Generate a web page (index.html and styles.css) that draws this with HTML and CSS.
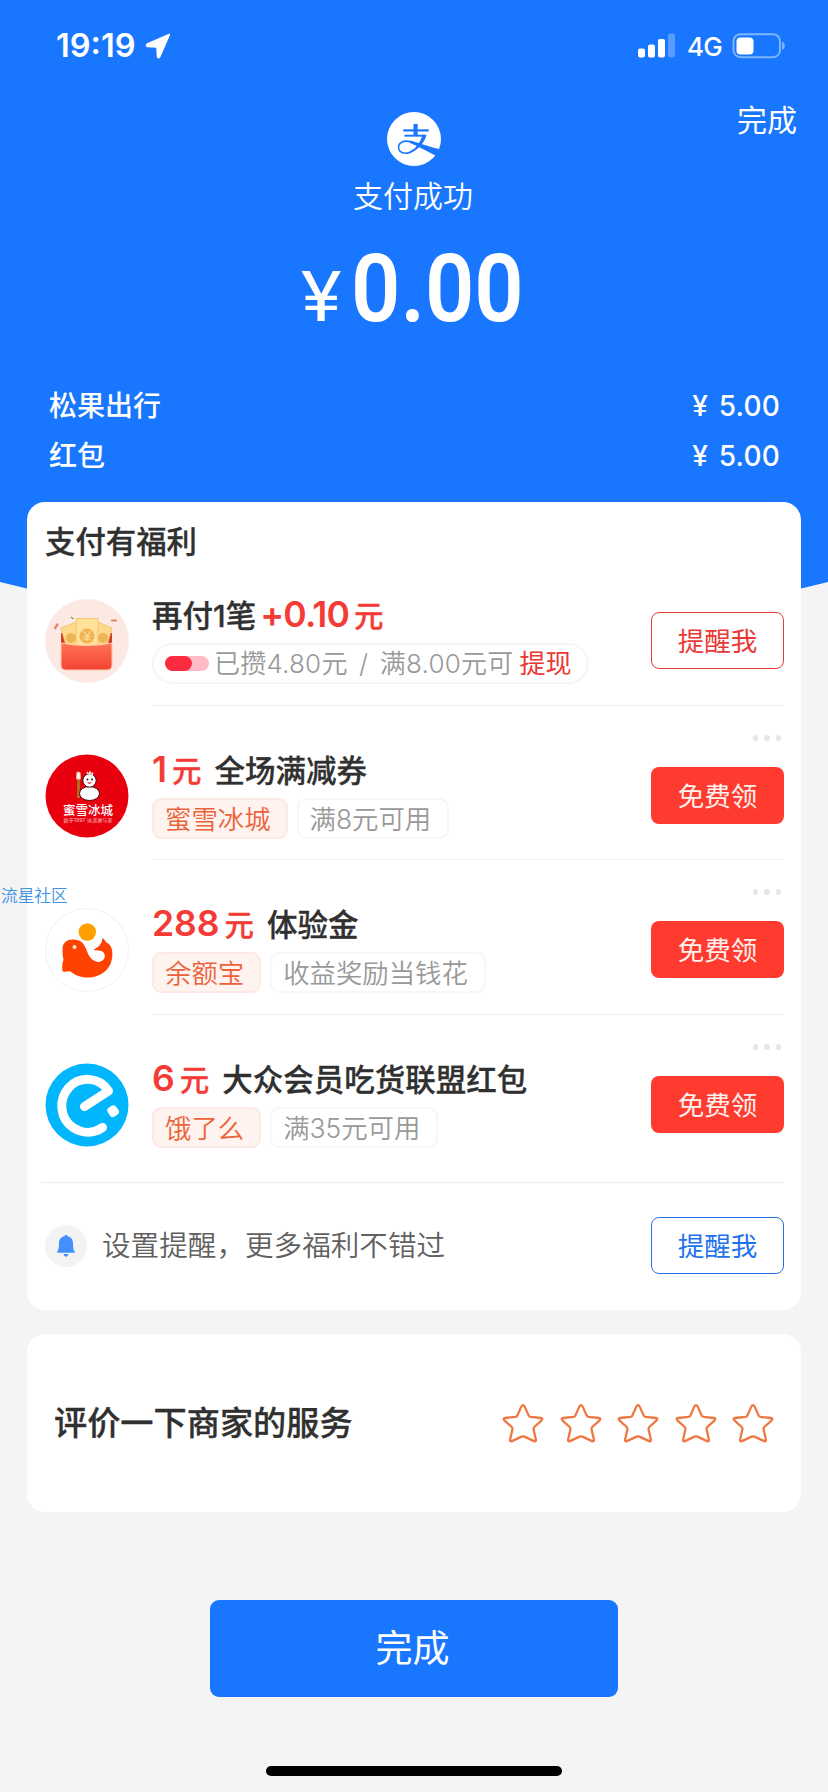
FILE: index.html
```html
<!DOCTYPE html>
<html lang="zh-CN">
<head>
<meta charset="utf-8">
<title>支付成功</title>
<link rel="stylesheet" href="styles.css">
</head>
<body>
<svg class="defs" width="0" height="0" aria-hidden="true">
  <symbol id="star" viewBox="0 0 42 40"><path d="M21 2.2 Q22 2.2 22.6 3.4 L26.600 12.400 Q27.200 13.700 28.600 13.900 L38.800 15 Q41.400 15.500 39.600 17.300 L32.300 24 Q31.300 25 31.600 26.400 L33.900 36.600 Q34.100 39 32.100 38.100 L22.400 33.600 Q21 33 19.600 33.600 L9.900 38.100 Q7.900 39 8.100 36.600 L10.400 26.400 Q10.700 25 9.700 24 L2.400 17.300 Q.6 15.500 3.200 15 L13.400 13.900 Q14.800 13.700 15.400 12.400 L19.400 3.400 Q20 2.200 21 2.200Z" fill="none" stroke="#ee7842" stroke-width="2.300"/></symbol>
</svg>
<div class="screen">
  <header class="hero">
    <div class="status">
      <div class="status-left">
        <span class="clock">19:19</span>
        <svg class="locate" width="26" height="26" viewBox="0 0 26 26"><path d="M24.300 1.600 L2.300 11.100 Q.4 12.500 2.500 13.400 L11.400 13.900 Q12 14 12 14.600 L12.500 23.600 Q13.200 25.600 14.700 23.700Z" fill="#fff" stroke="#fff" stroke-width="1.600" stroke-linejoin="round"/></svg>
      </div>
      <div class="status-right">
        <svg width="38" height="26" viewBox="0 0 38 26" fill="#fff"><rect x="0" y="15.500" width="7" height="9" rx="2"/><rect x="10" y="11.500" width="7" height="13" rx="2"/><rect x="20" y="6" width="7" height="18.500" rx="2"/><rect x="30" y="0.500" width="7" height="24" rx="2" opacity=".28"/></svg>
        <span class="network">4G</span>
        <svg width="54" height="26" viewBox="0 0 54 26"><rect x="1.500" y="1.200" width="46.500" height="23" rx="7" fill="none" stroke="#7db5ff" stroke-width="2"/><rect x="4.500" y="4.500" width="17" height="17" rx="4" fill="#fff"/><path d="M50 8.500 Q52.800 9.500 52.800 12.800 Q52.800 16 50 17Z" fill="#7db5ff"/></svg>
      </div>
    </div>
    <div class="nav"><span>完成</span></div>
    <div class="result">
      <svg width="54" height="54" viewBox="0 0 54 54"><circle cx="27" cy="27" r="27" fill="#fff"/><g fill="none" stroke="#1876ff"><path d="M16.300 18.400 H41.700" stroke-width="2.200"/><path d="M17.500 23.700 H37" stroke-width="1.900"/><path d="M28.600 12 V24" stroke-width="4.200"/><path d="M27.500 37.500 C23 41 20 41.300 18.500 41.300 C13 41.300 11.200 37.500 11.600 34.500 C12 30.500 16.500 28.800 21 29.200 C25 29.600 29 31.200 34 33.500" stroke-width="1.600"/></g><path d="M35.500 22.800 H39.500 C38 29 33 37.500 22 41.500 C29 36.500 34 29.500 35.500 22.800Z M22 28.500 C29 29.500 40 34.500 54 37.500 L52.500 41 L49.500 44 C41 40 32 34.500 22 30.500Z" fill="#1876ff"/></svg>
      <p class="result-text">支付成功</p>
      <p class="amount"><span class="yen">¥</span><span class="figure">0.00</span></p>
    </div>
    <dl class="bill">
      <div><dt>松果出行</dt><dd>¥ 5.00</dd></div>
      <div><dt>红包</dt><dd>¥ 5.00</dd></div>
    </dl>
  </header>

  <main>
    <section class="card benefits">
      <h2>支付有福利</h2>
      <article class="row">
        <svg class="logo" viewBox="0 0 84 84"><defs><linearGradient id="env" x1="0" y1="0" x2="0" y2="1"><stop offset="0" stop-color="#ff7555"/><stop offset="1" stop-color="#f34233"/></linearGradient></defs><circle cx="42" cy="42" r="42" fill="#fde9e3"/><path d="M16 34 H67 V52 H16Z" fill="#d63a2c"/><g fill="#ffd98a" stroke="#f6bd62" stroke-width=".8"><path d="M16 29 L34 22 V50 H22Z"/><path d="M67 29 L50 22 V50 H61Z"/><path d="M31 19.500 H53 V50 H31Z" fill="#ffe19a"/></g><g fill="#efb457"><circle cx="26" cy="39" r="5"/><circle cx="58" cy="39" r="5"/><circle cx="42" cy="37" r="7.500"/></g><path d="M38 32 L42 37 L46 32 M42 37 V42 M38.500 37.500 H45.500 M38.500 40 H45.500" stroke="#ffe19a" stroke-width="1.200" fill="none"/><path d="M16 44 Q42 49 67 44 V66 Q67 71 62 71 H21 Q16 71 16 66Z" fill="url(#env)" stroke="#ffc9a8" stroke-width="1"/><path d="M10 29 L12.500 25.500 M67 21.500 H71" stroke="#e58161" stroke-width="2.200" stroke-linecap="round"/><path d="M26 18 L28.500 20" stroke="#8a9b72" stroke-width="1.500"/></svg>
        <div class="body">
          <h3>再付1笔<b class="plus">+0.10</b><i class="unit">元</i></h3>
          <p class="pill"><span class="meter"><span></span></span><span class="saved">已攒4.80元 / 满8.00元可</span><em>提现</em></p>
        </div>
        <div class="action"><span class="dots"></span><a class="btn outline-red">提醒我</a></div>
      </article>
      <article class="row short">
        <svg class="logo" viewBox="0 0 84 84"><circle cx="42" cy="42" r="41.500" fill="#e8000f"/><g stroke="#3c0b0b" stroke-width="1"><path d="M33.500 22 L33.500 44" stroke="#b46a22" stroke-width="3"/><path d="M32 18 L35 18.500 L35.500 25 L31.500 25Z" fill="#fff" stroke="#efb9a0"/><ellipse cx="44.500" cy="39.500" rx="10" ry="7" fill="#fff"/><circle cx="44.500" cy="26.500" r="6.700" fill="#fff"/><path d="M41.500 20 L42 17 L43.500 19 L45 16.500 L46.500 19 L48.500 18 L48 21Z" fill="#f7d9c9" stroke="none"/></g><circle cx="42.500" cy="25.500" r="1" fill="#222"/><circle cx="47" cy="25.500" r="1" fill="#222"/><path d="M42 28.500 Q44.500 31 47 28.500Z" fill="#e8000f"/><text class="logo-name" x="43" y="60.500" text-anchor="middle" textLength="50">蜜雪冰城</text><text class="logo-tag" x="43" y="67.500" text-anchor="middle" textLength="49">始于1997·冰淇淋与茶</text></svg>
        <div class="body">
          <h3><b>1</b><i class="unit">元</i><span class="name">全场满减券</span></h3>
          <p class="tags"><span class="tag brand">蜜雪冰城</span><span class="tag">满8元可用</span></p>
        </div>
        <div class="action"><span class="dots"><i></i><i></i><i></i></span><a class="btn solid-red">免费领</a></div>
      </article>
      <article class="row">
        <svg class="logo" viewBox="0 0 84 84"><circle cx="42" cy="42" r="41.500" fill="#fff" stroke="#f1f1f1"/><circle cx="42.300" cy="24" r="8.700" fill="#ffa000"/><path d="M17.500 41 C17.500 34 23 31 29 31.500 C38 32 40 38 42.500 44.500 C45.500 52 51 55 55.500 53.500 C60 52 61 47.500 58.500 44.500 C56 41.500 51.500 43.500 48.500 41.500 C53 39.500 57 36.500 57.500 30 C59 30.500 60 33 61.500 34.500 C66.500 36.500 68 43 67.200 49 C66 62 55 69.500 42.500 69.500 C35 69.500 30 67 25.500 63.500 C23 62.500 20 65 17.500 63 C17 59.500 17 55 18.500 52 C17.500 48 17.500 44 17.500 41Z" fill="#ff4200"/><circle cx="29.500" cy="39" r="2" fill="#ffe4d8"/></svg>
        <div class="body">
          <h3><b>288</b><i class="unit">元</i><span class="name">体验金</span></h3>
          <p class="tags"><span class="tag brand">余额宝</span><span class="tag">收益奖励当钱花</span></p>
        </div>
        <div class="action"><span class="dots"><i></i><i></i><i></i></span><a class="btn solid-red">免费领</a></div>
      </article>
      <article class="row last">
        <svg class="logo" viewBox="0 0 84 84"><circle cx="42" cy="42" r="41.500" fill="#02b6fd"/><path d="M39.500 43.500 L63.500 28 C54 13 34 13 23.500 25 C13 37 15 56 28 64.500 C38 71 49 70.500 57.500 64.500" fill="none" stroke="#fff" stroke-width="9" stroke-linecap="round" stroke-linejoin="round"/><rect x="63" y="43" width="10" height="10.500" rx="3.200" fill="#fff" transform="rotate(-34 68 48)"/></svg>
        <div class="body">
          <h3><b>6</b><i class="unit">元</i><span class="name">大众会员吃货联盟红包</span></h3>
          <p class="tags"><span class="tag brand">饿了么</span><span class="tag">满35元可用</span></p>
        </div>
        <div class="action"><span class="dots"><i></i><i></i><i></i></span><a class="btn solid-red">免费领</a></div>
      </article>
      <div class="remind">
        <svg width="42" height="42" viewBox="0 0 42 42"><circle cx="21" cy="21" r="21" fill="#f3f3f3"/><path d="M21 9.800 Q22.300 9.800 22.500 11.300 C26.500 12 28 15 28 18.500 C28 23 28.500 25 29.700 26.500 V27.700 H12.300 V26.500 C13.500 25 14 23 14 18.500 C14 15 15.500 12 19.500 11.300 Q19.700 9.800 21 9.800Z M18.500 29 H23.500 Q23 31.700 21 31.700 Q19 31.700 18.500 29Z" fill="#438fff"/></svg>
        <span class="remind-text">设置提醒，更多福利不错过</span>
        <a class="btn outline-blue">提醒我</a>
      </div>
    </section>

    <section class="card rate">
      <h2>评价一下商家的服务</h2>
      <div class="stars">
        <svg><use href="#star"/></svg><svg><use href="#star"/></svg><svg><use href="#star"/></svg><svg><use href="#star"/></svg><svg><use href="#star"/></svg>
      </div>
    </section>
  </main>

  <a class="done">完成</a>
  <div class="home-bar"></div>
  <span class="watermark">流星社区</span>
</div>
</body>
</html>
```

FILE: styles.css
```css
* { box-sizing: border-box; margin: 0; padding: 0; }

body {
  background: #f4f4f4;
  color: #303030;
  font-family: Inter, "Noto Sans CJK SC", sans-serif;
}

i, em { font-style: normal; }
.defs { position: absolute; }

.screen {
  position: relative;
  display: flex;
  flex-direction: column;
  align-items: center;
  width: 828px;
  height: 1792px;
  overflow: hidden;
}

/* Blue header; its lower edge dips behind the first card */
.hero {
  width: 828px;
  height: 620px;
  margin-bottom: -118px;
  color: #fff;
  background: #1876ff;
  clip-path: polygon(0 0, 100% 0, 100% 582px, 90% 602px, 10% 602px, 0 582px);
}

.status {
  display: flex;
  justify-content: space-between;
  align-items: center;
  height: 90px;
  padding: 1px 42px 0 56px;
}
.status-left, .status-right { display: flex; align-items: center; }
.clock { width: 89px; padding-top: 1px; font-size: 32.5px; line-height: 40px; font-weight: 600; letter-spacing: 0; }
.network { width: 56px; padding: 2px 0 0 11px; font-size: 26px; line-height: 30px; font-weight: 500; letter-spacing: -.8px; }

.nav {
  display: flex;
  justify-content: flex-end;
  height: 22px;
  padding: 10px 31px 0 0;
  font-size: 30px;
  line-height: 40px;
  font-weight: 400;
}

.result { display: flex; flex-direction: column; align-items: center; height: 274px; }
.result-text { margin: 10px 2px 0 0; font-size: 30px; line-height: 40px; font-weight: 350; }
.amount { display: flex; align-items: baseline; width: 226px; margin-top: 18px; line-height: 110px; font-family: Roboto, sans-serif; white-space: nowrap; }
.amount span { flex: none; }
.yen { width: 50px; font-size: 70px; transform: scaleX(1.1); transform-origin: left; }
/* Narrow, DIN-like numerals */
.figure { font-size: 95px; font-weight: 600; transform: scaleX(.91); transform-origin: left; }

.bill { display: flex; flex-direction: column; gap: 10px; padding: 0 48px; font-size: 28px; line-height: 40px; font-weight: 500; }
.bill div { display: flex; justify-content: space-between; }
.bill dt { padding-left: 1px; }
.bill dd { font-size: 28px; letter-spacing: .2px; word-spacing: 3px; }

.card { position: relative; width: 774px; background: #fff; border-radius: 18px; }
.benefits { height: 808px; padding: 20px 17px 0 14px; }
.card h2, .card h3 { -webkit-text-stroke: .3px currentColor; }
.benefits h2 { height: 29px; padding-left: 4px; font-size: 30.4px; line-height: 40px; font-weight: 500; }

.row { display: grid; grid-template-columns: 84px 1fr; position: relative; height: 155px; padding-left: 4px; column-gap: 23px; }
.row.short { height: 154px; }
.row.last { height: 168px; border-bottom: 1px solid #ededed; }
.logo { width: 84px; height: 84px; margin-top: 48px; }
.logo-name { fill: #fff; font-size: 12.5px; font-weight: 500; }
.logo-tag { fill: #ffc4c4; font-size: 5px; }

.body { min-width: 0; padding-top: 44px; border-bottom: 1px solid #efefef; }
.last .body { border-bottom: 0; }
.body h3 { display: flex; align-items: baseline; height: 40px; font-size: 30.5px; line-height: 40px; font-weight: 500; white-space: nowrap; }
.body b { color: #f43b36; font-size: 35.5px; font-weight: 600; -webkit-text-stroke: 0; }
.body .plus { margin-left: 4px; letter-spacing: -.8px; }
.unit { margin-left: 5px; color: #f43b36; font-size: 29.5px; }
.name { margin-left: 13px; }

.pill { display: flex; align-items: center; width: 437px; height: 41px; margin-top: 8px; padding-left: 11px; border: 2px solid #f6f6f6; border-radius: 21px; color: #999; font-size: 26px; line-height: 36px; font-weight: 350; white-space: nowrap; }
.meter { width: 44px; height: 15px; margin-right: 5px; border-radius: 8px; background: #ffbcc6; }
.meter span { display: block; width: 27px; height: 15px; border-radius: 8px; background: #fb2b40; }
.saved { letter-spacing: .2px; word-spacing: 4px; }
.pill em { margin-left: 6px; color: #ea3835; font-weight: 400; }

.tags { display: flex; gap: 9px; margin-top: 8px; }
.tag { height: 41px; padding: 0 16px 0 11px; border: 2px solid #f7f7f7; border-radius: 9px; color: #999; font-size: 26.4px; line-height: 39px; font-weight: 350; white-space: nowrap; }
.tag.brand { padding-right: 15px; color: #ec6339; background: #fff3f0; border-color: #fde9e4; }

/* Call-to-action floats over the right end of the row */
.action { position: absolute; top: 29px; right: 0; display: flex; flex-direction: column; align-items: flex-end; gap: 26px; }
.dots { display: flex; gap: 6px; height: 6px; padding-right: 3px; }
.dots i { width: 5.5px; height: 5.5px; border-radius: 50%; background: #e6e6e6; }
.btn { display: block; width: 133px; height: 57px; border-radius: 8px; font-size: 26.5px; line-height: 58px; text-align: center; }
.outline-red { border: 1.5px solid #e83c3a; color: #ea3835; line-height: 56px; }
.solid-red { color: #fff2ee; background: #ff3b30; }
.outline-blue { border: 1.5px solid #2673e4; color: #1e72ee; line-height: 56px; margin-left: auto; }

.remind { display: flex; align-items: center; height: 125px; padding-left: 4px; }
.remind-text { margin-left: 15px; padding-top: 1px; color: #606060; font-size: 28.6px; line-height: 40px; font-weight: 350; }

.rate { display: flex; justify-content: space-between; align-items: center; height: 178px; margin-top: 24px; padding: 0 27px; }
.rate h2 { font-size: 33.2px; line-height: 44px; font-weight: 500; }
.stars { display: flex; gap: 15.4px; }
.stars svg { width: 42px; height: 40px; }

.done { width: 408px; height: 97px; margin-top: 88px; padding-right: 3px; border-radius: 9px; color: #fff; background: #1876ff; font-size: 37px; line-height: 97px; text-align: center; }
.home-bar { width: 296px; height: 10px; margin-top: 69px; border-radius: 5px; background: #000; }

.watermark { position: absolute; left: 1px; top: 886px; color: #4092e4; font-size: 16.7px; line-height: 20px; font-weight: 350; }
```
